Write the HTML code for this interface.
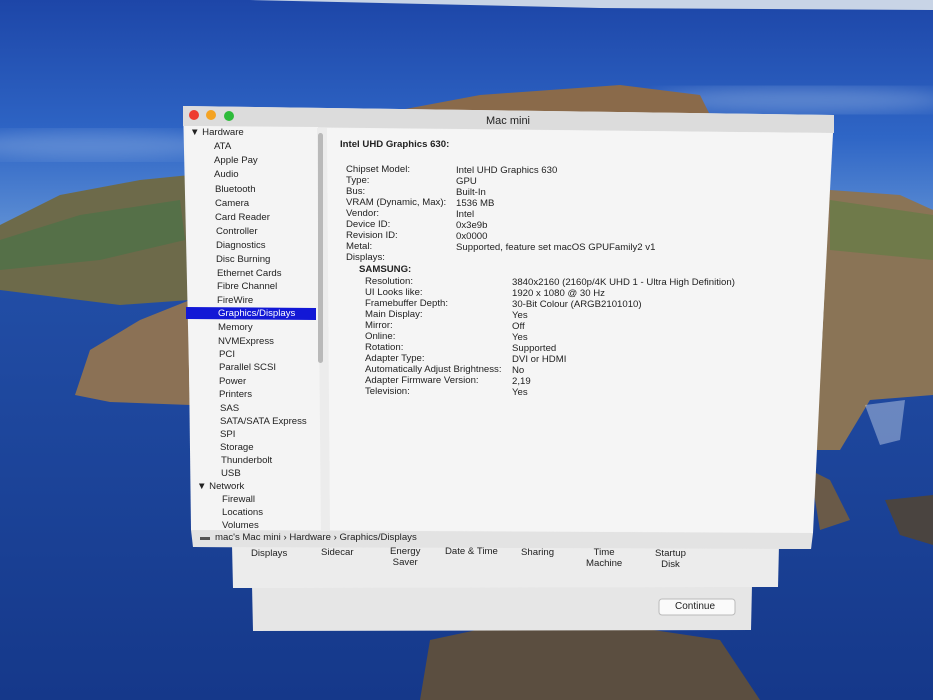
<!DOCTYPE html>
<html><head><meta charset="utf-8"><style>
html,body{margin:0;padding:0;width:933px;height:700px;overflow:hidden;font-family:"Liberation Sans",sans-serif}
.t{position:absolute;font-size:9.6px;color:#222;white-space:nowrap;line-height:11px}
.b{font-weight:bold}
</style></head><body>
<svg width="933" height="700" style="position:absolute;left:0;top:0">
<defs>
<linearGradient id="sky" x1="0" y1="0" x2="0" y2="1">
<stop offset="0" stop-color="#1d46a8"/><stop offset="0.6" stop-color="#2f66c6"/><stop offset="1" stop-color="#5e8fd4"/></linearGradient>
<linearGradient id="sea" x1="0" y1="0" x2="0" y2="1">
<stop offset="0" stop-color="#2a5cb8"/><stop offset="1" stop-color="#15388a"/></linearGradient>
<filter id="bl"><feGaussianBlur stdDeviation="8"/></filter>
</defs>
<rect width="933" height="700" fill="url(#sea)"/>
<rect width="933" height="230" fill="url(#sky)"/>
<path d="M0 0 H933 V10 L600 8 L250 0Z" fill="#c8d4e6"/>
<ellipse cx="800" cy="100" rx="150" ry="12" fill="#9ab8e4" opacity=".45" filter="url(#bl)"/>
<ellipse cx="90" cy="145" rx="130" ry="14" fill="#9ab8e4" opacity=".4" filter="url(#bl)"/>
<path d="M0 225 L60 195 L140 180 L190 175 L190 300 L120 305 L40 295 L0 290Z" fill="#6d6a4a"/>
<path d="M0 240 L80 215 L180 200 L185 240 L100 260 L0 270Z" fill="#557048"/>
<path d="M75 395 L90 350 L140 320 L190 300 L190 405 L110 402Z" fill="#8b7155"/>
<path d="M400 110 L480 95 L620 85 L700 95 L710 115 L400 115Z" fill="#8a6a4a"/>
<path d="M830 190 L900 195 L933 210 L933 395 L870 400 L840 450 L815 450 L815 200Z" fill="#8a7456"/>
<path d="M830 200 L933 215 L933 260 L830 250Z" fill="#6f7a4a"/>
<path d="M810 470 L830 480 L850 520 L820 530Z" fill="#6a5a48"/>
<path d="M885 500 L933 495 L933 545 L900 535Z" fill="#4a4440"/>
<path d="M420 700 L430 640 L500 625 L620 625 L720 640 L760 700Z" fill="#5b4e40"/>
<path d="M865 405 L905 400 L900 440 L880 445Z" fill="#dfe8f4" opacity=".4"/>
<!-- back windows -->
<polygon points="252,585 752,585 751,630 253,631" fill="#e6e6e6"/>
<polygon points="232,545 779,545 778,587 233,588" fill="#ececec"/>
<rect x="659" y="599" width="76" height="16" rx="3" fill="#fafafa" stroke="#bbb"/>
<!-- main window -->
<polygon points="183,106 834,115 811,549 193,547" fill="#f2f2f2"/>
<polygon points="183,106 834,115 834,133 183,126" fill="#dcdcdc"/>
<polygon points="186,126 318,127 322,530 191,530" fill="#f4f4f4"/>
<polygon points="317,128 327,128 330,530 321,530" fill="#ececec"/>
<rect x="318" y="133" width="5" height="230" rx="2.5" fill="#b9b9b9"/>
<polygon points="327,128 832,133 813,533 330,530" fill="#f5f5f5"/>
<polygon points="191,530 813,533 811,549 193,547" fill="#e3e3e3"/>
<rect x="200" y="537" width="10" height="3" fill="#555"/>
<polygon points="186,307 316,308 316,320 186,319" fill="#1218d6"/>
<circle cx="194" cy="115" r="5" fill="#ee3b30"/>
<circle cx="211" cy="115" r="5" fill="#f4a323"/>
<circle cx="229" cy="116" r="5" fill="#2dbb3a"/>
</svg>
<div class="t" style="left:486px;top:116px;font-size:11px">Mac mini</div>
<div class="t" style="left:190px;top:127px">▼ Hardware</div>
<div class="t" style="left:214px;top:141px">ATA</div>
<div class="t" style="left:214px;top:155px">Apple Pay</div>
<div class="t" style="left:214px;top:169px">Audio</div>
<div class="t" style="left:215px;top:184px">Bluetooth</div>
<div class="t" style="left:215px;top:198px">Camera</div>
<div class="t" style="left:215px;top:212px">Card Reader</div>
<div class="t" style="left:216px;top:226px">Controller</div>
<div class="t" style="left:216px;top:240px">Diagnostics</div>
<div class="t" style="left:216px;top:254px">Disc Burning</div>
<div class="t" style="left:217px;top:268px">Ethernet Cards</div>
<div class="t" style="left:217px;top:281px">Fibre Channel</div>
<div class="t" style="left:217px;top:295px">FireWire</div>
<div class="t" style="left:218px;top:308px;color:#fff">Graphics/Displays</div>
<div class="t" style="left:218px;top:322px">Memory</div>
<div class="t" style="left:218px;top:336px">NVMExpress</div>
<div class="t" style="left:219px;top:349px">PCI</div>
<div class="t" style="left:219px;top:362px">Parallel SCSI</div>
<div class="t" style="left:219px;top:376px">Power</div>
<div class="t" style="left:219px;top:389px">Printers</div>
<div class="t" style="left:220px;top:403px">SAS</div>
<div class="t" style="left:220px;top:416px">SATA/SATA Express</div>
<div class="t" style="left:220px;top:429px">SPI</div>
<div class="t" style="left:220px;top:442px">Storage</div>
<div class="t" style="left:221px;top:455px">Thunderbolt</div>
<div class="t" style="left:221px;top:468px">USB</div>
<div class="t" style="left:197px;top:481px">▼ Network</div>
<div class="t" style="left:222px;top:494px">Firewall</div>
<div class="t" style="left:222px;top:507px">Locations</div>
<div class="t" style="left:222px;top:520px">Volumes</div>
<div class="t" style="left:215px;top:532px">mac's Mac mini › Hardware › Graphics/Displays</div>
<div class="t b" style="left:340px;top:139px">Intel UHD Graphics 630:</div>
<div class="t" style="left:346px;top:164px">Chipset Model:<br>Type:<br>Bus:<br>VRAM (Dynamic, Max):<br>Vendor:<br>Device ID:<br>Revision ID:<br>Metal:<br>Displays:</div>
<div class="t" style="left:456px;top:165px">Intel UHD Graphics 630<br>GPU<br>Built-In<br>1536 MB<br>Intel<br>0x3e9b<br>0x0000<br>Supported, feature set macOS GPUFamily2 v1</div>
<div class="t b" style="left:359px;top:264px">SAMSUNG:</div>
<div class="t" style="left:365px;top:276px">Resolution:<br>UI Looks like:<br>Framebuffer Depth:<br>Main Display:<br>Mirror:<br>Online:<br>Rotation:<br>Adapter Type:<br>Automatically Adjust Brightness:<br>Adapter Firmware Version:<br>Television:</div>
<div class="t" style="left:512px;top:277px">3840x2160 (2160p/4K UHD 1 - Ultra High Definition)<br>1920 x 1080 @ 30 Hz<br>30-Bit Colour (ARGB2101010)<br>Yes<br>Off<br>Yes<br>Supported<br>DVI or HDMI<br>No<br>2,19<br>Yes</div>
<div class="t" style="left:251px;top:548px">Displays</div>
<div class="t" style="left:321px;top:547px">Sidecar</div>
<div class="t" style="left:390px;top:546px;text-align:center">Energy<br>Saver</div>
<div class="t" style="left:445px;top:546px">Date &amp; Time</div>
<div class="t" style="left:521px;top:547px">Sharing</div>
<div class="t" style="left:586px;top:547px;text-align:center">Time<br>Machine</div>
<div class="t" style="left:655px;top:548px;text-align:center">Startup<br>Disk</div>
<div class="t" style="left:675px;top:601px;font-size:10px">Continue</div>
</body></html>
